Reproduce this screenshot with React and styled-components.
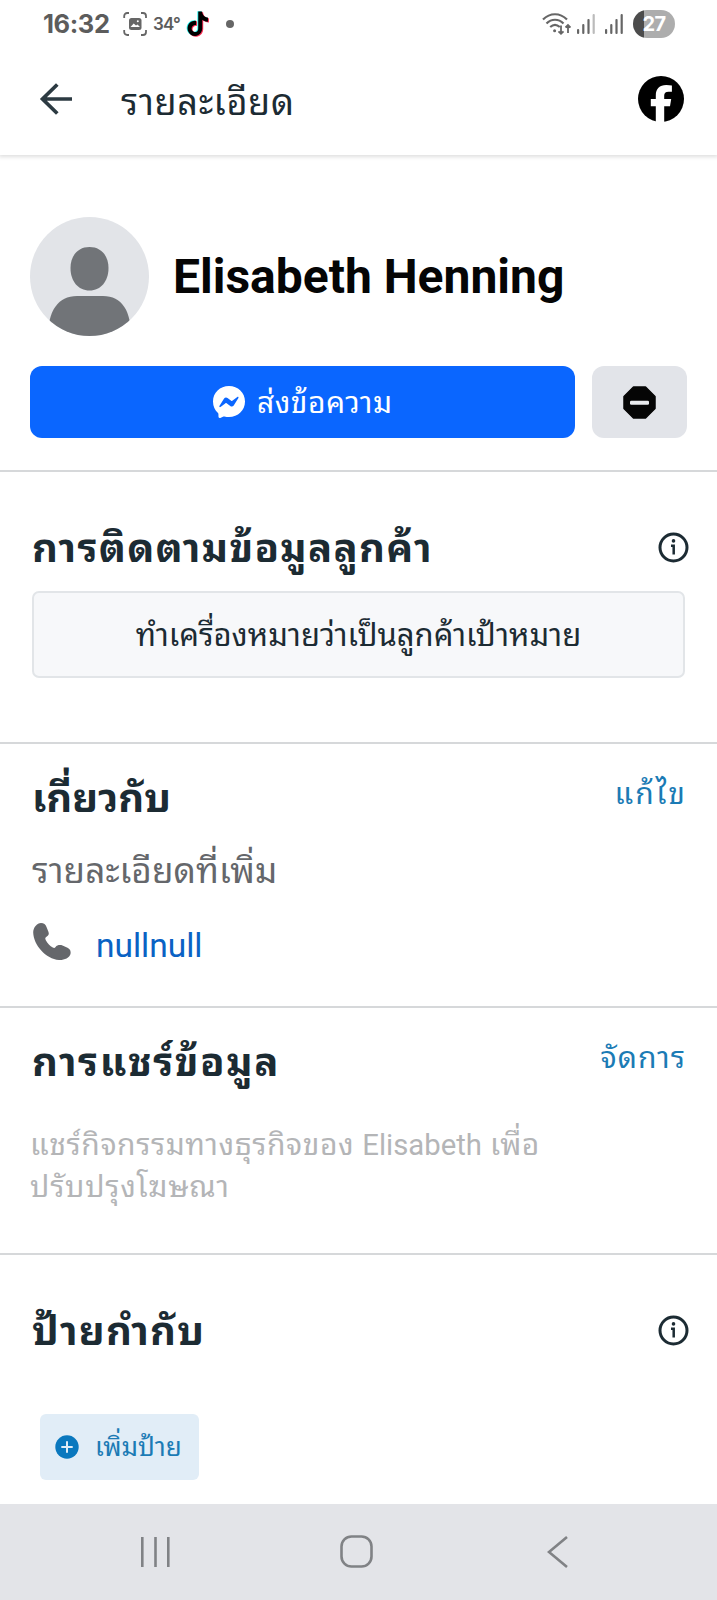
import React from "react";
import styled, { createGlobalStyle } from "styled-components";

const Global = createGlobalStyle`
  * { box-sizing: border-box; }
  html, body { margin: 0; padding: 0; background: #fff; }
  body { font-family: Roboto, "Noto Sans Thai Looped", "Droid Sans Thai", Sarabun, Waree, Garuda, sans-serif; color: #1c2b33; }
  svg { display: block; flex: none; }
  button { border: 0; padding: 0; background: none; font: inherit; color: inherit; display: flex; align-items: center; }
`;

const Screen = styled.div`
  width: 717px;
  height: 1600px;
  overflow: hidden;
  display: flex;
  flex-direction: column;
  background: #fff;
`;

const StatusBar = styled.div`
  height: 48px;
  flex: none;
  display: flex;
  align-items: center;
  padding: 0 42px 0 43px;
  color: #5c5c5c;
`;
const Clock = styled.span`
  font: 700 25.5px/48px Inter, sans-serif;
  width: 80px;
  letter-spacing: -0.4px;
  white-space: nowrap;
`;
const Temperature = styled.span`
  font: 600 17px/48px Inter, sans-serif;
  letter-spacing: -0.8px;
  width: 33px;
  margin-left: 6px;
  white-space: nowrap;
`;
const NoticeDot = styled.i`
  width: 8px;
  height: 8px;
  border-radius: 50%;
  background: #666;
  margin-left: 16px;
`;
const StatusRight = styled.div`
  margin-left: auto;
  display: flex;
  align-items: center;
  gap: 10px;
`;
const WifiSlot = styled.span`
  margin-right: -4px;
`;
const Battery = styled.span`
  width: 42px;
  height: 28px;
  border-radius: 14px;
  background: linear-gradient(90deg, #4c4c4c 11px, #adadad 11px);
  color: #fff;
  font: 700 20px/28px Inter, sans-serif;
  letter-spacing: -0.5px;
  text-align: center;
`;

const Header = styled.header`
  height: 107px;
  flex: none;
  display: flex;
  align-items: center;
  padding: 0 33px 5px 39px;
  box-shadow: 0 1px 4px 1px rgba(0, 0, 0, 0.13);
  clip-path: inset(0 0 -10px 0);
`;
const Text = styled.span`
  font-size: ${(p) => p.$size}px;
  font-weight: ${(p) => p.$weight || 400};
  line-height: ${(p) => p.$line || 40}px;
  letter-spacing: ${(p) => p.$track || 0}px;
  color: ${(p) => p.$color || "#1c2b33"};
  margin-top: ${(p) => p.$top || 0}px;
  margin-right: ${(p) => -(p.$track || 0)}px;
  white-space: nowrap;
`;
const Latin = styled.span`
  font-size: 29.3px;
  letter-spacing: 0;
`;
const HeaderTitle = styled.h1`
  margin: 7px auto 0 48px;
  display: flex;
`;

const Section = styled.section`
  height: ${(p) => p.$height}px;
  flex: none;
  padding: ${(p) => p.$pad};
  border-bottom: ${(p) => (p.$last ? "0" : "2px solid #d6d8da")};
`;
const Row = styled.div`
  display: flex;
  align-items: flex-start;
  justify-content: space-between;
  height: 40px;
`;
const DetailRow = styled(Row)`
  margin-top: 35px;
`;

const Identity = styled.div`
  display: flex;
  align-items: center;
  gap: 24px;
  height: 119px;
`;
const Actions = styled.div`
  display: flex;
  gap: 17px;
  margin-top: 30px;
`;
const MessageButton = styled.button`
  && { justify-content: center; background: #0a66ff; }
  width: 545px;
  height: 72px;
  border-radius: 12px;
  gap: 12px;
`;
const BlockButton = styled.button`
  && { justify-content: center; background: #e2e4e9; }
  width: 95px;
  height: 72px;
  border-radius: 12px;
`;
const LeadButton = styled.button`
  && { justify-content: center; background: #f7f8fa; border: 2px solid #e2e5e8; }
  width: 653px;
  height: 87px;
  border-radius: 7px;
  margin-top: 19px;
`;
const PhoneRow = styled.div`
  display: flex;
  align-items: flex-start;
  gap: 25px;
  margin: 32px 0 0 1px;
`;
const Note = styled.p`
  margin: 43px 0 0 -2px;
  display: flex;
  flex-direction: column;
`;
const AddLabel = styled.button`
  && { background: #e1edf7; padding-left: 15px; gap: 16px; }
  width: 159px;
  height: 66px;
  border-radius: 6px;
  margin: 59px 0 0 8px;
`;
const NavBar = styled.nav`
  height: 96px;
  flex: none;
  background: #e3e4e8;
  display: flex;
  align-items: center;
  justify-content: space-between;
  padding: 0 149px 1px 140px;
`;
const HomeKey = styled.span`
  margin-right: 5px;
`;

const InfoIcon = () => (
  <svg width="31" height="31" viewBox="0 0 31 31" fill="none" stroke="#1c2b33" strokeWidth="3">
    <circle cx="15.5" cy="15.5" r="13.5" />
    <path d="M13 13.8h2.700v8.700" strokeWidth="2.500" />
    <circle cx="15.500" cy="8.900" r="1.800" fill="#1c2b33" stroke="none" />
  </svg>
);

const ScreenshotIcon = () => (
  <svg width="24" height="24" viewBox="0 0 24 24">
    <path d="M1.2 6V4a3 3 0 0 1 3-3H6M18 1h2a3 3 0 0 1 3 3v2M23 18v2a3 3 0 0 1-3 3h-2M6 23H4.200a3 3 0 0 1-3-3v-2" fill="none" stroke="#666" strokeWidth="1.8" />
    <rect x="6" y="6" width="12.500" height="12" rx="2.500" fill="#666" />
    <path d="M7.500 15l3.200-3.500 2.300 2 1.500-1 2.500 2.500z" fill="#fff" />
    <circle cx="14.800" cy="9.300" r="1" fill="#fff" />
  </svg>
);

const noteShape =
  "M12.525.02c1.31-.02 2.61-.01 3.91-.02.08 1.53.63 3.09 1.75 4.17 1.12 1.11 2.7 1.62 4.24 1.79v4.03c-1.44-.05-2.89-.35-4.2-.97-.57-.26-1.1-.59-1.62-.93-.01 2.92.01 5.84-.02 8.75-.08 1.4-.54 2.79-1.35 3.94-1.31 1.92-3.58 3.17-5.91 3.21-1.43.08-2.86-.31-4.08-1.03-2.02-1.19-3.44-3.37-3.65-5.71-.02-.5-.03-1-.01-1.49.18-1.9 1.12-3.72 2.58-4.96 1.66-1.44 3.98-2.13 6.15-1.72.02 1.48-.04 2.96-.04 4.44-.99-.32-2.15-.23-3.02.37-.63.41-1.11 1.04-1.36 1.75-.21.51-.15 1.07-.14 1.61.24 1.64 1.82 3.02 3.5 2.87 1.12-.01 2.19-.66 2.77-1.61.19-.33.4-.67.41-1.06.1-1.79.06-3.57.07-5.36.01-4.03-.01-8.05.02-12.07z";

const TikTokIcon = () => (
  <svg width="24" height="26" viewBox="0 -0.500 24.500 25.500" preserveAspectRatio="none">
    <path d={noteShape} fill="#25f4ee" transform="translate(-.9 -.3)" />
    <path d={noteShape} fill="#fe2c55" transform="translate(1 .7)" />
    <path d={noteShape} fill="#000" />
  </svg>
);

const WifiIcon = () => (
  <svg width="29" height="23" viewBox="0 0 29 23" fill="none" stroke="#666" strokeWidth="2.200">
    <path d="M1 6.500C8-.500 18-.500 25 6.500M4.500 10.500c5-5 12-5 17 0M8.200 14c3.300-3 6.300-3 9.600 0" />
    <circle cx="12.600" cy="17.800" r="1.500" fill="#666" stroke="none" />
    <path d="M19 12.500v8M16.500 18.300l2.500 2.500 2.500-2.500M26 20v-8M23.500 14.500L26 12l2.500 2.500" strokeWidth="1.800" />
  </svg>
);

const SignalIcon = ({ weak }) => (
  <svg width="18" height="20" viewBox="0 0 18 20" fill="#666">
    <rect x="0" y="15" width="2.200" height="5" rx="1" />
    <rect x="5.200" y="10" width="2.200" height="10" rx="1" />
    <rect x="10.400" y="5" width="2.200" height="15" rx="1" />
    <rect x="15.600" y="0" width="2.200" height="20" rx="1" fill={weak ? "#bbb" : "#666"} />
  </svg>
);

const BackArrow = () => (
  <svg width="34" height="34" viewBox="0 0 34 34" fill="none" stroke="#2c3a42" strokeWidth="3.700">
    <path d="M33 17H3.500M18.300 2.500L3.500 17l14.800 14.500" />
  </svg>
);

const FacebookIcon = () => (
  <svg width="46" height="46" viewBox="0 0 46 46">
    <circle cx="23" cy="23" r="23" fill="#000" />
    <path d="M17.800 46V30.300h-5V23h5v-3.500c0-6.900 3.700-10.500 10.500-10.500 2 0 3.900.2 5.600.5v6.300h-3.300c-3.200 0-4.400 1.300-4.400 4V23h7l-1.200 7.300h-5.800V46z" fill="#fff" />
  </svg>
);

const Avatar = () => (
  <svg width="119" height="119" viewBox="0 0 119 119">
    <clipPath id="avatarDisc"><circle cx="59.500" cy="59.500" r="59.500" /></clipPath>
    <g clipPath="url(#avatarDisc)">
      <rect width="119" height="119" fill="#e2e4e8" />
      <path d="M59.500 30C71 30 78.500 38.500 78.500 51c0 13-7.500 22.500-19 22.500S40.500 64 40.500 51c0-12.500 7.500-21 19-21z" fill="#717478" />
      <path d="M18 119c0-25 10-40 29-40h26c19 0 28 15 28 40z" fill="#717478" />
    </g>
  </svg>
);

const MessengerIcon = () => (
  <svg width="32" height="32" viewBox="0 0 32 32">
    <path d="M16 0C7 0 0 6.600 0 15.500c0 4.700 1.900 8.700 5 11.500.3.200.4.600.4.900l.1 2.900c0 .9 1 1.500 1.800 1.100l3.200-1.400c.3-.1.600-.1.900-.1 1.500.4 3 .6 4.600.6 9 0 16-6.600 16-15.500S25 0 16 0z" fill="#fff" />
    <path d="M6.400 20l4.700-7.500c.7-1.200 2.300-1.500 3.400-.6l3.700 2.800c.4.300.8.300 1.100 0l5-3.800c.7-.5 1.500.3 1.100 1l-4.700 7.500c-.7 1.200-2.300 1.500-3.400.6l-3.700-2.800c-.4-.3-.8-.3-1.100 0l-5 3.800c-.7.500-1.500-.3-1.100-1z" fill="#0a66ff" />
  </svg>
);

const BlockIcon = () => (
  <svg width="33" height="33" viewBox="0 0 33 33">
    <path d="M10.500 1h12L32 10.500v12L22.500 32h-12L1 22.500v-12z" fill="#050505" stroke="#050505" strokeWidth="1.500" strokeLinejoin="round" />
    <rect x="7" y="14.700" width="19" height="4" rx="1.300" fill="#e9ebee" />
  </svg>
);

const PhoneIcon = () => (
  <svg width="38" height="38" viewBox="0 0 38 38">
    <path d="M8 0C11 0 12.500 1.500 13.500 4L15.500 9C16.300 11.500 15.500 12.500 13.500 13.800C12 14.800 12 15.500 12.800 17.200C14.500 20.500 17 22.700 19.800 24.600C21 25.400 21.800 25.200 22.600 24C24 22 27 21.500 29.500 22.500L34.500 24.700C37.500 26.300 38 28.500 37.500 31C36.500 35 31 37.300 26 37C13 36 .500 22 .200 9.500C.200 4.500 4 0 8 0z" fill="#65676b" />
  </svg>
);

const PlusIcon = () => (
  <svg width="24" height="24" viewBox="0 0 24 24">
    <circle cx="12" cy="12" r="11.700" fill="#0a78be" />
    <path d="M12 6.300v11.400M6.300 12h11.400" stroke="#e1edf7" strokeWidth="2" />
  </svg>
);

const link = "#1b7bb5";

export default function App() {
  return (
    <Screen>
      <Global />
      <StatusBar>
        <Clock>16:32</Clock>
        <ScreenshotIcon />
        <Temperature>34°</Temperature>
        <TikTokIcon />
        <NoticeDot />
        <StatusRight>
          <WifiSlot><WifiIcon /></WifiSlot>
          <SignalIcon weak />
          <SignalIcon />
          <Battery>27</Battery>
        </StatusRight>
      </StatusBar>
      <Header>
        <BackArrow />
        <HeaderTitle><Text $size={36} $track={0.7}>รายละเอียด</Text></HeaderTitle>
        <FacebookIcon />
      </Header>

      <Section $height={317} $pad="62px 30px 0">
        <Identity>
          <Avatar />
          <Text $size={48} $weight={700} $line={56} $color="#050505">Elisabeth Henning</Text>
        </Identity>
        <Actions>
          <MessageButton>
            <MessengerIcon />
            <Text $size={30} $track={0.5} $top={2} $color="#fff">ส่งข้อความ</Text>
          </MessageButton>
          <BlockButton><BlockIcon /></BlockButton>
        </Actions>
      </Section>

      <Section $height={272} $pad="60px 28px 0 32px">
        <Row>
          <Text $size={40} $weight={700} $track={1.3} $top={-3}>การติดตามข้อมูลลูกค้า</Text>
          <InfoIcon />
        </Row>
        <LeadButton><Text $size={31} $top={2}>ทำเครื่องหมายว่าเป็นลูกค้าเป้าหมาย</Text></LeadButton>
      </Section>

      <Section $height={264} $pad="32px 32px 0">
        <Row>
          <Text $size={40} $weight={700} $top={3}>เกี่ยวกับ</Text>
          <Text $size={30} $track={2} $top={-2} $color={link}>แก้ไข</Text>
        </Row>
        <DetailRow><Text $size={35} $track={0.15} $top={1} $color="#65676b">รายละเอียดที่เพิ่ม</Text></DetailRow>
        <PhoneRow>
          <PhoneIcon />
          <Text $size={33.5} $top={3} $color="#0a62c4">nullnull</Text>
        </PhoneRow>
      </Section>

      <Section $height={247} $pad="33px 32px 0">
        <Row>
          <Text $size={40} $weight={700} $track={1.6} $top={2}>การแชร์ข้อมูล</Text>
          <Text $size={30} $track={1.1} $top={-3} $color={link}>จัดการ</Text>
        </Row>
        <Note>
          <Text $size={30} $track={0.6} $line={41} $color="#b4b5b7">แชร์กิจกรรมทางธุรกิจของ <Latin>Elisabeth</Latin> เพื่อ</Text>
          <Text $size={30} $track={0.75} $line={41} $color="#b4b5b7">ปรับปรุงโฆษณา</Text>
        </Note>
      </Section>

      <Section $height={249} $pad="60px 28px 0 32px" $last>
        <Row>
          <Text $size={40} $weight={700} $track={1.2} $top={-3}>ป้ายกำกับ</Text>
          <InfoIcon />
        </Row>
        <AddLabel>
          <PlusIcon />
          <Text $size={26} $color={link}>เพิ่มป้าย</Text>
        </AddLabel>
      </Section>

      <NavBar>
        <svg width="30" height="30" viewBox="0 0 30 30" stroke="#808285" strokeWidth="2.600"><path d="M2.300 0v30M15.500 0v30M28.300 0v30" /></svg>
        <HomeKey>
          <svg width="33" height="33" viewBox="0 0 33 33" fill="none" stroke="#808285" strokeWidth="2.600"><rect x="1.500" y="1.500" width="30" height="30" rx="10" /></svg>
        </HomeKey>
        <svg width="21" height="32" viewBox="0 0 21 32" fill="none" stroke="#808285" strokeWidth="2.600"><path d="M20 1L2 16l18 15" /></svg>
      </NavBar>
    </Screen>
  );
}
